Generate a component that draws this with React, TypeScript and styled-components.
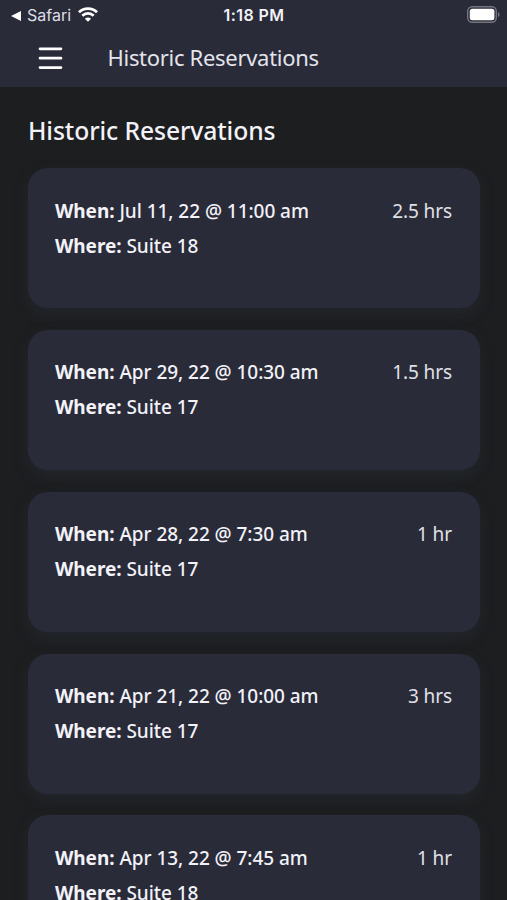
import React from "react";
import styled, { createGlobalStyle } from "styled-components";

const Global = createGlobalStyle`
  * { box-sizing: border-box; }
  html, body { margin: 0; background: #1d1e20; overflow: hidden; }
`;
const Screen = styled.div`
  width: 507px;
  height: 900px;
  overflow: hidden;
  background: #1d1e20;
  color: #f2f2f8;
  font-family: "Noto Sans", sans-serif;
`;
const Top = styled.header`
  height: 87px;
  background: #2a2b39;
`;
const Status = styled.div`
  height: 29px;
  display: grid;
  grid-template-columns: 1fr auto 1fr;
  align-items: center;
  padding: 0 7px 0 10px;
  font-family: Inter, sans-serif;
  font-size: 16px;
  line-height: 29px;
`;
const Back = styled.div`
  display: flex;
  align-items: center;
  padding-top: 1px;
  color: #dedee5;
  svg:first-child { margin-right: 5px; }
  svg:last-child { margin: 0 0 2px 7px; }
`;
const Clock = styled.div`
  padding-top: 1px;
  font-weight: 600;
  letter-spacing: 0.45px;
  transform: translateX(-1px);
`;
const Power = styled.div`
  display: flex;
  justify-content: flex-end;
  padding-bottom: 1px;
`;
const Bar = styled.div`
  display: flex;
  height: 57px;
  padding: 0 38px;
  align-items: center;
`;
const MenuButton = styled.button`
  width: 25px;
  height: 26px;
  padding: 0;
  border: 0;
  margin-right: 44.5px;
  background: none;
  display: flex;
`;
const BarTitle = styled.div`
  padding-bottom: 2px;
  font-size: 22px;
  line-height: 30px;
  letter-spacing: -0.3px;
  color: #e4e4ec;
  white-space: nowrap;
`;
const Main = styled.main`
  padding: 28px 27px 0 28px;
`;
const Heading = styled.h1`
  margin: 0 0 21px;
  font-size: 24.7px;
  line-height: 32px;
  font-weight: 500;
  letter-spacing: -0.1px;
`;
const List = styled.div`
  display: grid;
  gap: 21.85px;
`;
const Card = styled.article`
  height: 140px;
  padding: 25.6px 28px 0 27px;
  border-radius: 20px;
  background: #2a2b39;
  box-shadow: 0 6px 14px rgba(42, 49, 61, 0.4);
  font-size: 19px;
  line-height: 35px;
`;
const Row = styled.div`
  display: flex;
  justify-content: space-between;
  font-weight: 500;
  letter-spacing: -0.05px;
  white-space: nowrap;
  b { font-weight: 700; letter-spacing: -0.05px; }
`;
const Duration = styled.span`
  font-weight: 400;
  letter-spacing: -0.1px;
  color: #e0e0e8;
`;

const reservations = [
  { when: "Jul 11, 22 @ 11:00 am", where: "Suite 18", duration: "2.5 hrs" },
  { when: "Apr 29, 22 @ 10:30 am", where: "Suite 17", duration: "1.5 hrs" },
  { when: "Apr 28, 22 @ 7:30 am", where: "Suite 17", duration: "1 hr" },
  { when: "Apr 21, 22 @ 10:00 am", where: "Suite 17", duration: "3 hrs" },
  { when: "Apr 13, 22 @ 7:45 am", where: "Suite 18", duration: "1 hr" },
];

export default function App() {
  return (
    <Screen>
      <Global />
      <Top>
        <Status>
          <Back>
            <svg width="12" height="12" viewBox="0 0 12 12"><path d="M1 6 11 1v10Z" fill="#fff" /></svg>
            Safari
            <svg width="20" height="15" viewBox="0 0 20 15" fill="none" stroke="#fff" strokeWidth="2.8">
              <path d="M1 5.3C6 .5 14 .5 19 5.3M4.3 8.7c3.2-3 8.2-3 11.4 0" />
              <path d="m10 14.8-3.1-3.1c1.8-1.6 4.4-1.6 6.2 0Z" fill="#fff" stroke="none" />
            </svg>
          </Back>
          <Clock>1:18 PM</Clock>
          <Power>
            <svg width="33" height="17" viewBox="0 0 33 17">
              <rect x=".7" y=".7" width="28.6" height="15.6" rx="4.5" fill="none" stroke="#747580" strokeWidth="1.4" />
              <rect x="2.8" y="2.8" width="24.6" height="11.4" rx="2.5" fill="#fff" />
              <path d="M31 6c2 .8 2 4.2 0 5Z" fill="#747580" />
            </svg>
          </Power>
        </Status>
        <Bar>
          <MenuButton aria-label="Menu">
            <svg width="25" height="26" viewBox="0 0 25 26" stroke="#fff" strokeWidth="2.7" strokeLinecap="round"><path d="M2 3.8h21M2 13.2h21M2 22.6h21" /></svg>
          </MenuButton>
          <BarTitle>Historic Reservations</BarTitle>
        </Bar>
      </Top>
      <Main>
        <Heading>Historic Reservations</Heading>
        <List>
          {reservations.map((r) => (
            <Card key={r.when}>
              <Row><span><b>When:</b> {r.when}</span><Duration>{r.duration}</Duration></Row>
              <Row><span><b>Where:</b> {r.where}</span></Row>
            </Card>
          ))}
        </List>
      </Main>
    </Screen>
  );
}
